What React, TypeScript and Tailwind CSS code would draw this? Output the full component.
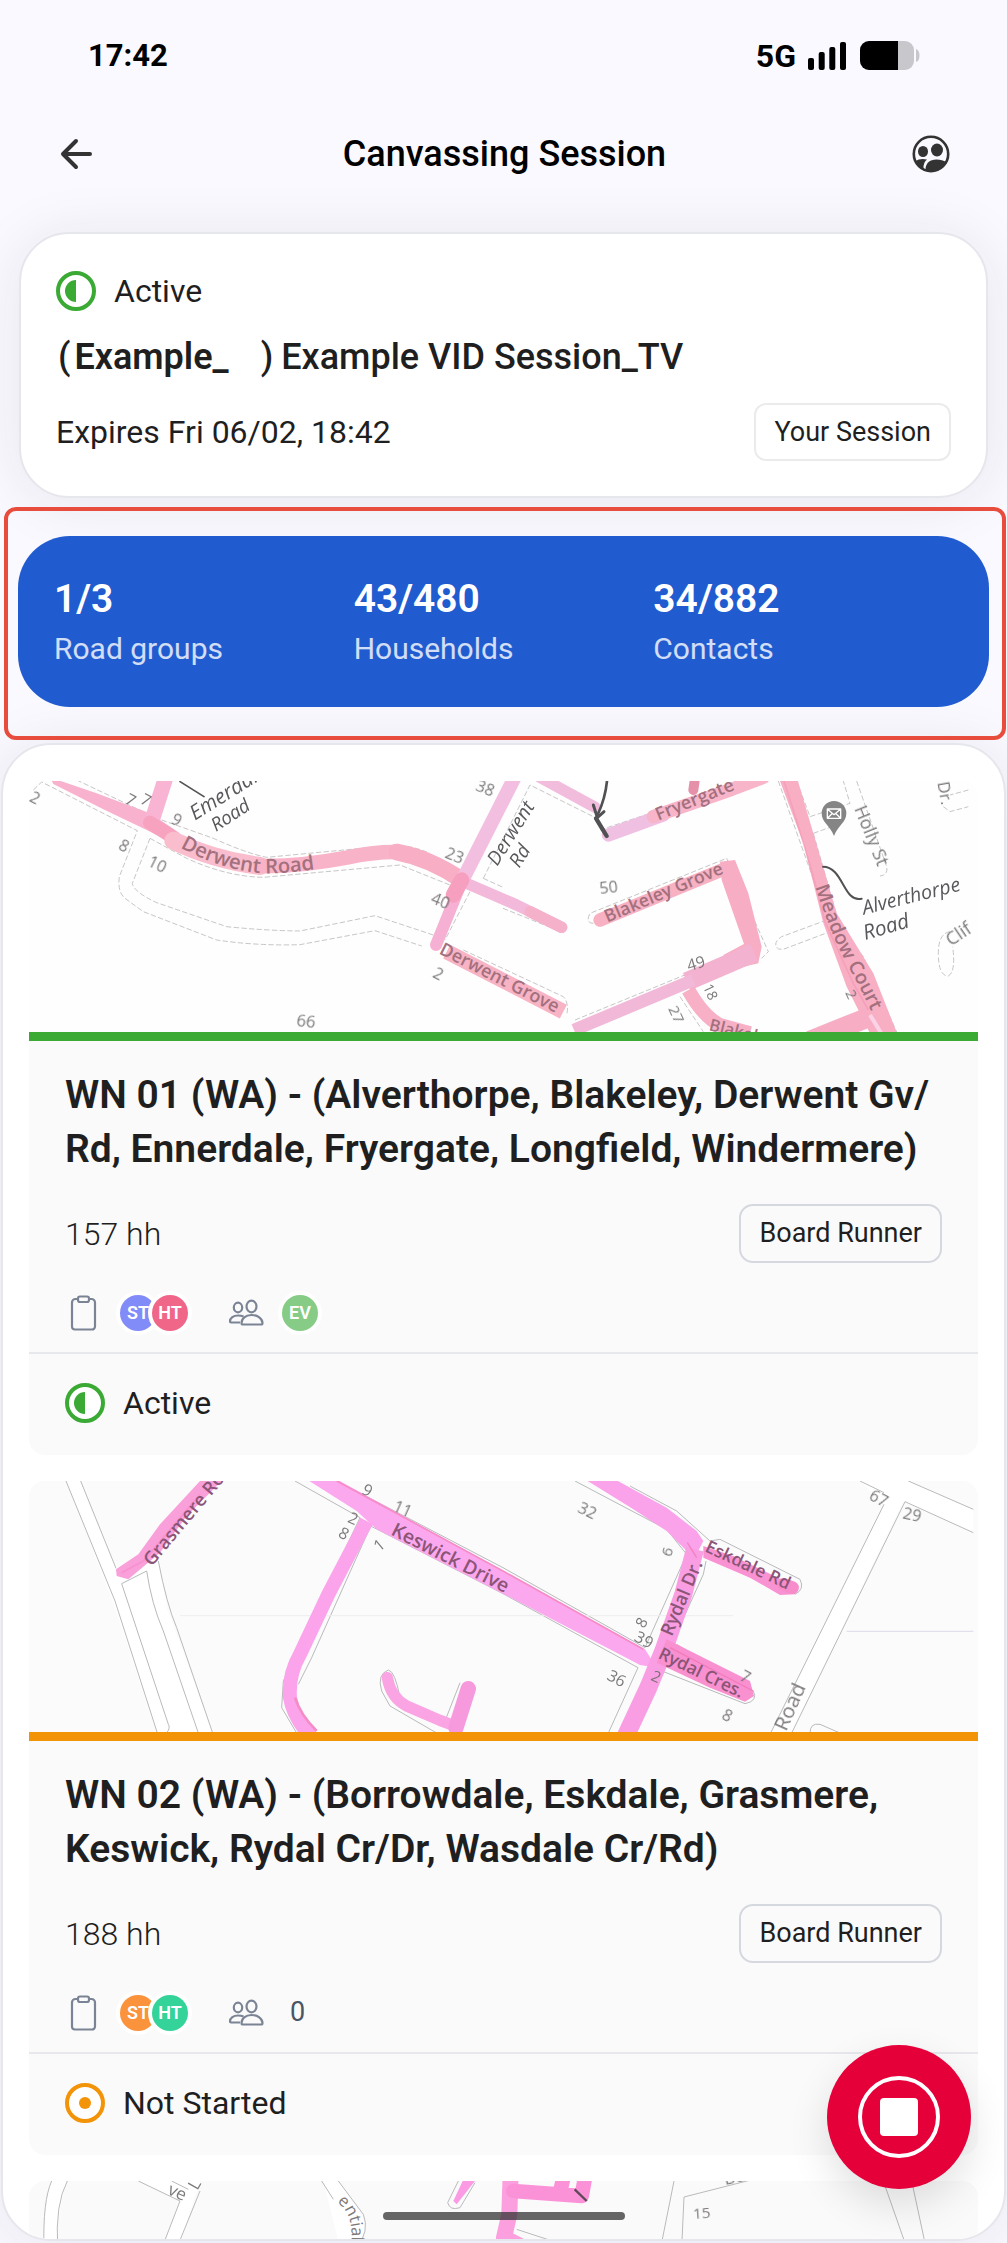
import type { ReactNode } from "react";

type Label = [text: string, x: number, y: number, angle: number, size?: number];

function MapLabels({ items }: { items: Label[] }) {
  return (
    <g fill="#6f6b6d" fontWeight="500" opacity="0.9">
      {items.map(([text, x, y, angle, size]) => (
        <text key={`${text}-${x}`} fontSize={size ?? 48} transform={`translate(${x} ${y}) rotate(${angle})`}>
          {text}
        </text>
      ))}
    </g>
  );
}

function MapFrame({ box, title, children }: { box: string; title: string; children: ReactNode }) {
  return (
    <svg
      viewBox={box}
      preserveAspectRatio="xMidYMin slice"
      role="img"
      aria-label={title}
      className="block h-[251px] w-full font-['Open_Sans',sans-serif]"
      fill="none"
      strokeLinejoin="round"
    >
      {children}
    </svg>
  );
}

function DerwentMap() {
  return (
    <MapFrame box="87 33 2847 753" title="Map of Derwent Road and Blakeley Grove">
      <rect x="87" y="33" width="2847" height="753" fill="#fefefe" />
      <g stroke="#b9bbb9" strokeWidth="2.5" strokeDasharray="16 7">
        <path d="M100 60L125 36L412 182L358 320Q352 365 375 385L430 425L650 510Q770 528 900 524L1125 482L1265 528" />
        <path d="M230 30L440 130M485 150L640 205Q740 250 800 262L1180 226Q1230 224 1290 250" />
        <path d="M450 205L397 340Q400 365 470 398L680 470Q800 482 900 483L1125 437L1300 495" />
        <path d="M450 205L560 265Q680 320 790 322L1200 285L1350 345" />
        <path d="M1500 80L1390 300M1410 365L1335 510M1450 325L1590 45L1780 140M1450 325L1509 352" />
        <path d="M1509 415L1690 488M1390 540L1690 680Q1708 700 1700 735" />
        <path d="M1800 180L2250 30M1780 460Q1755 460 1770 430L2180 265L2305 545L2285 565" />
        <path d="M1725 750L2225 545M2040 680L2110 785M2335 33L2455 370L2560 640L2650 786" />
        <path d="M2390 33L2430 140L2550 100L2530 33M2440 190L2510 165M2440 190L2520 470L2590 560L2690 786" />
        <path d="M2480 450L2345 500Q2315 520 2335 537L2350 538L2490 485" />
        <path d="M2570 33L2660 290Q2665 315 2640 318M2905 60L2850 75M2830 110L2850 125L2905 110" />
        <path d="M2850 485Q2815 490 2815 550Q2815 618 2845 618Q2868 605 2858 530" />
      </g>
      <path d="M150 22L290 70L450 130L540 190L510 215L440 180L310 118L160 42Z" fill="#f9b2cd" />
      <g strokeLinecap="round">
        <path d="M498 20L455 155" stroke="#f8b4d2" strokeWidth="46" />
        <path d="M450 158L510 196" stroke="#f7a3bf" strokeWidth="42" />
        <path d="M520 212Q640 270 780 288" stroke="#f9bdcd" strokeWidth="54" />
        <path d="M780 288Q900 290 1040 263Q1120 245 1190 246" stroke="#f9b3c8" strokeWidth="44" />
        <path d="M1190 246Q1290 265 1385 330" stroke="#f8aec5" strokeWidth="50" />
        <path d="M1545 20L1390 325" stroke="#f3bfe0" strokeWidth="42" />
        <path d="M1400 340L1550 405L1685 472" stroke="#f3b9da" strokeWidth="34" />
        <path d="M1590 425L1685 472" stroke="#f6b1ca" strokeWidth="34" />
        <path d="M1385 335L1308 525" stroke="#f5b0d3" strokeWidth="36" />
        <path d="M1385 330L1360 375" stroke="#f79fbe" strokeWidth="46" />
        <path d="M1340 545L1690 725" stroke="#f8b3c5" strokeWidth="46" strokeLinecap="butt" />
        <path d="M1620 22L1785 112" stroke="#f2bddd" strokeWidth="34" />
        <path d="M1825 195L1990 135" stroke="#f0c0e3" strokeWidth="40" />
        <path d="M1960 140L2195 58L2290 22" stroke="#f8b5c9" strokeWidth="40" />
        <path d="M2085 24L2080 60" stroke="#e691aa" strokeWidth="30" />
        <path d="M1800 450L2185 292" stroke="#f7b1c2" strokeWidth="40" />
      </g>
      <path d="M2160 275L2205 270L2245 370L2285 530L2275 580L2190 600L2170 555L2232 522L2165 330Z" fill="#f7aec4" />
      <path d="M2262 548L2060 635" stroke="#f4b2d1" strokeWidth="56" />
      <path d="M2080 630L1722 780" stroke="#f2b8d8" strokeWidth="38" />
      <path d="M2065 660Q2110 740 2160 765L2250 790" stroke="#f7b0c5" strokeWidth="42" />
      <path d="M2335 20L2390 20L2440 190L2510 430L2620 610L2695 800L2615 800L2540 650L2470 460L2410 220Z" fill="#f8afc4" />
      <path d="M2430 812L2610 740" stroke="#f7aec4" strokeWidth="60" />
      <path d="M2610 735L2650 800" stroke="#fbd3e6" strokeWidth="12" />
      <path d="M2350 28Q2430 270 2475 455L2560 640L2605 720" stroke="#f491b3" strokeWidth="5" opacity="0.5" />
      <g stroke="#515154" strokeLinecap="round">
        <path d="M1822 22Q1818 80 1794 132" strokeWidth="8" />
        <path d="M1780 105L1792 143L1812 125" strokeWidth="9" />
        <path d="M1788 145L1820 198" strokeWidth="13" />
        <path d="M540 35L612 80" strokeWidth="5" />
        <path d="M2469 290C2530 290 2530 400 2585 386" strokeWidth="6" />
      </g>
      <path d="M2502 93a37 37 0 0 1 37 37c0 27-25 37-37 68c-12-31-37-41-37-68a37 37 0 0 1 37-37Z" fill="#858585" />
      <path d="M2482 117h40v28h-40Zm0 0l20 17l20-17M2482 145l14-14M2522 145l-14-14" stroke="#fff" strokeWidth="4" />
      <path id="derwent-road" d="M540 232Q660 300 790 310Q860 312 980 292" />
      <text fontSize="61" fontWeight="600" fill="#a3707e">
        <textPath href="#derwent-road">Derwent Road</textPath>
      </text>
      <path id="meadow-court" d="M2446 350Q2495 500 2540 580Q2590 670 2640 780" />
      <text fontSize="58" fontWeight="600" fill="#a3707e">
        <textPath href="#meadow-court">Meadow Court</textPath>
      </text>
      <g fill="#a3707e" fontWeight="600">
        <text fontSize="54" transform="translate(1315 550) rotate(27)">Derwent Grove</text>
        <text fontSize="54" transform="translate(1975 152) rotate(-22)">Fryergate</text>
        <text fontSize="53" transform="translate(1822 458) rotate(-23)">Blakeley Grove</text>
        <text fontSize="50" transform="translate(2125 780) rotate(14)">Blakeley</text>
      </g>
      <MapLabels
        items={[
          ["2", 85, 92, 28], ["7", 372, 98, 28], ["7", 418, 98, 28], ["9", 510, 158, 28], ["8", 352, 236, 28],
          ["10", 440, 286, 26], ["38", 1424, 60, 22], ["23", 1332, 262, 22], ["40", 1290, 398, 22], ["2", 1295, 620, 28],
          ["66", 888, 768, 6, 50], ["50", 1800, 372, -6], ["49", 2066, 604, -16], ["18", 2108, 650, 65, 42],
          ["27", 2004, 716, 65, 46], ["2", 2535, 668, 65, 44], ["Holly St", 2562, 116, 68, 54], ["Dr.", 2812, 38, 80, 50],
          ["Clif", 2853, 530, -34, 54],
        ]}
      />
      <g fill="#58585c" fontStyle="italic">
        <text fontSize="62" transform="translate(585 152) rotate(-32)">Emerdale</text>
        <text fontSize="56" transform="translate(648 186) rotate(-33)">Road</text>
        <text fontSize="58" transform="translate(1492 290) rotate(-58)">Derwent</text>
        <text fontSize="58" transform="translate(1558 296) rotate(-58)">Rd</text>
        <text fontSize="59" transform="translate(2592 434) rotate(-14)">Alverthorpe</text>
        <text fontSize="62" transform="translate(2596 510) rotate(-16)">Road</text>
      </g>
    </MapFrame>
  );
}

function KeswickMap() {
  return (
    <MapFrame box="87 60 2847 753" title="Map of Keswick Drive and Rydal Drive">
      <rect x="87" y="60" width="2847" height="760" fill="#fbfbfb" />
      <g fill="#fff">
        <path d="M198 60L242 60L348 320L475 285L500 440L640 816L470 816L345 440Z" />
        <path d="M2725 60L2920 145L2920 215L2710 120L2375 816L2312 816L2652 130L2580 60Z" />
      </g>
      <g stroke="#b8babb" strokeWidth="3">
        <path d="M198 60L345 420L472 816M242 60L348 322M500 816Q512 800 505 790L365 368L440 330M440 330Q455 430 490 510L595 816M475 300Q500 430 530 500L638 816" />
        <path d="M885 60L1080 170L910 530L850 660L845 740L890 816M1040 75L1509 320L1935 560M1112 195L1509 398L1914 620L1825 816M1112 195L935 590L895 670" />
        <path d="M1145 690Q1130 640 1165 627Q1185 630 1200 710L1335 780L1380 665M1145 690L1170 735L1310 816" />
        <path d="M1725 60L2000 205L2060 280L1935 560M1890 75L2030 150L2130 240L2160 235L2400 355Q2415 385 2385 400M2118 300L2110 340L2010 560" />
        <path d="M2580 60L2652 95M2652 130L2312 816M2725 60L2920 145M2920 215L2715 122L2375 816M2030 550L2260 690Q2275 720 2235 728L1960 620" />
        <path d="M2430 816Q2430 785 2460 790L2520 816" />
      </g>
      <path d="M540 464H2200" stroke="#eeeeee" strokeWidth="3" />
      <path d="M2540 511H2920" stroke="#e2e2ee" strokeWidth="4" />
      <path d="M600 60L665 60L560 165L480 275L385 355L350 345L348 325L415 280L480 190Z" fill="#f9a0da" />
      <path d="M365 335L430 300L600 100" stroke="#f781c4" strokeWidth="5" opacity="0.5" />
      <path d="M920 55L1010 55L1165 140L1509 330L1935 565L1970 620L1920 612L1509 398L1130 205L1070 150Z" fill="#fca8ef" />
      <path d="M1010 60L1509 330L1930 565" stroke="#f78bc8" strokeWidth="5" />
      <path d="M1100 180L985 400L900 580Q865 640 870 710Q880 770 935 830" stroke="#fba4ec" strokeWidth="42" />
      <path d="M885 710Q900 760 950 810" stroke="#f58cc5" strokeWidth="8" />
      <path d="M1162 650Q1172 710 1220 735L1320 778L1365 795" stroke="#fba4e4" strokeWidth="34" strokeLinecap="round" />
      <path d="M1405 683L1368 800" stroke="#f79add" strokeWidth="46" strokeLinecap="round" />
      <path d="M1760 58L1850 58L2000 140L2090 210L2110 240L2090 280L2060 270L2000 210L1900 145Z" fill="#fba3ea" />
      <path d="M2085 265L2050 400L1990 570L1945 680L1875 830" stroke="#fa9ee3" strokeWidth="54" />
      <path d="M2110 255L2200 285L2395 380L2385 400L2340 402L2250 350L2110 290Z" fill="#f992d2" />
      <path d="M2350 370L2378 380" stroke="#f88ccb" strokeWidth="38" strokeLinecap="round" />
      <path d="M2000 535L2130 600L2250 660L2262 705L2235 722L2130 680L1970 605Z" fill="#f990d0" />
      <path d="M2010 560L2260 690M2062 245L2090 290" stroke="#ee74b4" strokeWidth="4" opacity="0.7" />
      <g fill="#8a5576" fontWeight="600">
        <text fontSize="55" transform="translate(455 318) rotate(-50)">Grasmere Road</text>
        <text fontSize="58" transform="translate(1170 220) rotate(27)">Keswick Drive</text>
        <text fontSize="53" transform="translate(2112 270) rotate(25)">Eskdale Rd</text>
        <text fontSize="55" transform="translate(2015 528) rotate(-67)">Rydal Dr.</text>
        <text fontSize="52" transform="translate(1972 590) rotate(26)">Rydal Cres.</text>
      </g>
      <MapLabels
        items={[
          ["9", 1082, 96, 28], ["11", 1176, 148, 24], ["2", 1040, 182, 24], ["8", 1012, 226, 28], ["1", 1138, 274, -40],
          ["32", 1730, 152, 26], ["6", 2012, 290, -70, 46], ["8", 1932, 504, -60, 46], ["39", 1900, 538, 28], ["36", 1818, 654, 28],
          ["2", 1950, 656, 24, 46], ["7", 2216, 656, 28], ["8", 2162, 772, 28], ["67", 2604, 114, 28], ["29", 2706, 172, 12],
          ["Way Road", 2302, 940, -66, 62],
        ]}
      />
    </MapFrame>
  );
}

function LowerMap() {
  return (
    <MapFrame box="87 120 2847 753" title="Map of the third road group">
      <rect x="87" y="120" width="2847" height="753" fill="#fafafa" />
      <g fill="#fff">
        <path d="M155 120L202 120Q172 200 172 320L132 320Q128 200 155 120Z" />
        <path d="M415 120L600 120L540 310L490 310L540 180Z" />
        <path d="M970 120L1015 120L1090 230Q1105 280 1060 320L1020 320Z" />
      </g>
      <g stroke="#b8babb" strokeWidth="3">
        <path d="M155 120Q128 180 132 320M202 120Q165 190 173 320M415 120L540 180L490 310M515 120L565 145M600 150L535 310M965 120L1000 175M1015 120L1090 220Q1110 270 1070 320" />
        <path d="M1375 120L1343 185Q1350 210 1380 200L1425 125M2022 120L1982 320M2045 320L2052 168L2280 110M2650 120L2720 320M2735 120L2778 320M1550 265L1780 340" />
      </g>
      <path d="M1395 105L1425 120L1370 190L1360 180Z" fill="#fa9be3" />
      <path d="M1532 100L1528 220L1512 290L1590 330" stroke="#fc9fdf" strokeWidth="48" />
      <path d="M1540 150L1745 165L1755 110M1690 110L1680 155" stroke="#fb92d8" strokeWidth="44" strokeLinecap="round" />
      <path d="M1724 145L1760 180" stroke="#5c4856" strokeWidth="7" />
      <path id="sequential" d="M1010 185Q1070 220 1050 340" />
      <text fontSize="50" fontWeight="500" fill="#7c7879">
        <textPath href="#sequential">ential</textPath>
      </text>
      <MapLabels items={[["ve", 500, 158, 24, 52], ["L", 592, 150, -60, 50], ["15", 2080, 234, -4, 46], ["Bea", 2176, 132, -12, 50]]} />
    </MapFrame>
  );
}

function ActiveIcon() {
  return (
    <svg viewBox="0 0 40 40" className="size-10 shrink-0" aria-hidden="true">
      <circle cx="20" cy="20" r="18" fill="#fff" stroke="#3aaa35" strokeWidth="4" />
      <path d="M20 9a11 11 0 0 0 0 22Z" fill="#3aaa35" />
    </svg>
  );
}

function NotStartedIcon() {
  return (
    <svg viewBox="0 0 40 40" className="size-10 shrink-0" aria-hidden="true">
      <circle cx="20" cy="20" r="18" fill="#fff" stroke="#f39308" strokeWidth="4" />
      <circle cx="20" cy="20" r="6" fill="#f39308" />
    </svg>
  );
}

function ClipboardIcon() {
  return (
    <svg viewBox="0 0 28 36" className="h-9 w-7" fill="none" stroke="#7b8494" strokeWidth="2.2" aria-hidden="true">
      <path d="M8 4H5.500a3.500 3.500 0 0 0-3.500 3.500V31.500a3 3 0 0 0 3 3H22a3 3 0 0 0 3-3V7.500A3.500 3.500 0 0 0 21.500 4H19" />
      <rect x="8" y="1.500" width="11" height="5.500" rx="2" />
    </svg>
  );
}

function PeopleIcon() {
  return (
    <svg viewBox="0 0 36 28" className="h-7 w-9" fill="none" stroke="#7b8494" strokeWidth="2.2" strokeLinejoin="round" aria-hidden="true">
      <ellipse cx="23.500" cy="7.500" rx="5" ry="5.800" />
      <ellipse cx="10" cy="8.500" rx="4.200" ry="4.800" />
      <path d="M13.500 24c0-4.500 4-8 10-8s11 3.500 11 8q0 1.500-1.500 1.500h-18q-1.500 0-1.500-1.500Z" />
      <path d="M15.500 17.500C14 16.800 12.200 16.500 10 16.500c-4.500 0-8 2.500-8 6q0 1 1 1h9" />
    </svg>
  );
}

type Person = { initials: string; color: string };

function Avatar({ initials, color }: Person) {
  return (
    <span className="relative rounded-full bg-white p-1">
      <span className={`flex size-9 items-center justify-center rounded-full text-lg font-semibold text-white ${color}`}>
        {initials}
      </span>
    </span>
  );
}

type RoadGroup = {
  title: string;
  households: string;
  leads: Person[];
  helpers: Person[];
  status: "Active" | "Not Started";
  bar: string;
  map: ReactNode;
};

const groups: RoadGroup[] = [
  {
    title: "WN 01 (WA) - (Alverthorpe, Blakeley, Derwent Gv/\u200bRd, Ennerdale, Fryergate, Longfield, Windermere)",
    households: "157 hh",
    leads: [
      { initials: "ST", color: "bg-[#828cf8]" },
      { initials: "HT", color: "bg-[#f06688]" },
    ],
    helpers: [{ initials: "EV", color: "bg-[#86cc86]" }],
    status: "Active",
    bar: "bg-[#3aaa35]",
    map: <DerwentMap />,
  },
  {
    title: "WN 02 (WA) - (Borrowdale, Eskdale, Grasmere, Keswick, Rydal Cr/Dr, Wasdale Cr/Rd)",
    households: "188 hh",
    leads: [
      { initials: "ST", color: "bg-[#fb923c]" },
      { initials: "HT", color: "bg-[#34d399]" },
    ],
    helpers: [],
    status: "Not Started",
    bar: "bg-[#f39308]",
    map: <KeswickMap />,
  },
];

function GroupCard({ group }: { group: RoadGroup }) {
  return (
    <article className="shrink-0 overflow-hidden rounded-2xl bg-[#fafafa]">
      {group.map}
      <div className={`h-[9px] ${group.bar}`} />
      <div className="flex flex-col gap-7 px-9 pt-[27px] pb-[18px]">
        <h2 className="text-[39px] leading-[54px] font-semibold">{group.title}</h2>
        <div className="flex items-center justify-between">
          <p className="text-[32px] leading-[44px] font-light">{group.households}</p>
          <button type="button" className="h-[59px] rounded-[14px] border-2 border-[#d5d8df] px-[18px] text-[27px]">
            Board Runner
          </button>
        </div>
        <div className="flex h-[43px] items-center">
          <span className="ml-[5px] w-[46px]">
            <ClipboardIcon />
          </span>
          <div className="flex -space-x-3">
            {group.leads.map((person) => (
              <Avatar key={person.initials} {...person} />
            ))}
          </div>
          <span className="ml-9 w-[50px]">
            <PeopleIcon />
          </span>
          {group.helpers.length ? (
            group.helpers.map((person) => <Avatar key={person.initials} {...person} />)
          ) : (
            <span className="ml-3 text-[27px] text-gray-600">0</span>
          )}
        </div>
      </div>
      <div className="flex items-center gap-[18px] border-t-2 border-[#e7e8ec] px-9 pt-[29px] pb-8">
        {group.status === "Active" ? <ActiveIcon /> : <NotStartedIcon />}
        <span className="text-[32px] leading-10">{group.status}</span>
      </div>
    </article>
  );
}

function Stat({ value, label }: { value: string; label: string }) {
  return (
    <div className="flex flex-col">
      <dt className="order-last text-[30px] leading-[50px] text-white/80">{label}</dt>
      <dd className="text-[39px] leading-[50px] font-semibold">{value}</dd>
    </div>
  );
}

export default function App() {
  return (
    <div className="relative flex h-screen flex-col overflow-hidden bg-[#faf9ff] pb-0.5 font-[Roboto,sans-serif] text-[#1f1f1f]">
      <div className="flex h-28 shrink-0 items-center justify-between pr-[87px] pl-[88px] text-black">
        <span className="text-[31px] font-bold">17:42</span>
        <div className="flex items-center gap-3">
          <span className="text-[32px] leading-8 font-bold">5G</span>
          <svg viewBox="0 0 38 28" className="h-7 w-[38px]" aria-label="Signal" role="img">
            <rect y="16" width="6" height="12" rx="2" />
            <rect x="10.700" y="10" width="6" height="18" rx="2" />
            <rect x="21.300" y="5" width="6" height="23" rx="2" />
            <rect x="32" width="6" height="28" rx="2" />
          </svg>
          <svg viewBox="0 0 60 30" className="ml-0.5 h-[30px] w-[60px]" aria-label="Battery" role="img">
            <rect width="54" height="29" rx="9" fill="#c8c7cc" />
            <path d="M9 0H38V29H9a9 9 0 0 1-9-9V9a9 9 0 0 1 9-9Z" />
            <path d="M56 8q3.500 1 3.500 6.500t-3.500 6.500Z" fill="#c8c7cc" />
          </svg>
        </div>
      </div>

      <header className="flex h-[84px] shrink-0 items-center justify-between px-[57px]">
        <button type="button" aria-label="Back" className="size-10">
          <svg viewBox="0 0 40 40" fill="none" stroke="#333" strokeWidth="4" strokeLinecap="round" strokeLinejoin="round">
            <path d="M33 20H6M19 7L6 20L19 33" />
          </svg>
        </button>
        <h1 className="text-[36px] leading-[44px] font-medium text-black">Canvassing Session</h1>
        <button type="button" aria-label="Team" className="size-[38px]">
          <svg viewBox="0 0 38 38" fill="#333">
            <circle cx="19" cy="19" r="17.200" fill="none" stroke="#333" strokeWidth="2.600" />
            <ellipse cx="11" cy="16.500" rx="5" ry="5.500" />
            <ellipse cx="25" cy="15" rx="6" ry="6.500" />
            <path d="M3.500 26Q8 23 15 24.500Q11 27.500 11.500 34Q6 31 3.500 26Z" />
            <path d="M13.500 34.500C13.500 28.500 17.500 24.500 24.500 24.500q6 0 9.500 2.500Q29 36.500 19 36.500Q16 36.500 13.500 34.500Z" />
          </svg>
        </button>
      </header>

      <section className="mx-[19px] mt-9 flex shrink-0 flex-col gap-6 rounded-[50px] border-2 border-[#e6e6ed] bg-white px-[35px] pt-[37px] pb-[35px] shadow-[0_4px_60px_rgba(30,30,70,0.09)]">
        <div className="flex items-center gap-[18px]">
          <ActiveIcon />
          <span className="text-[32px] leading-10">Active</span>
        </div>
        <h2 className="flex text-[36px] leading-[44px] font-semibold">
          <span className="pl-0.5 font-medium">(</span>
          <span className="pl-1">Example_</span>
          <span className="pl-8 font-medium">)</span>
          <span className="pl-2 font-medium">Example VID Session_TV</span>
        </h2>
        <div className="flex items-center justify-between">
          <p className="text-[32px] leading-[44px]">Expires Fri 06/02, 18:42</p>
          <button type="button" className="h-[58px] rounded-[12px] border-2 border-[#ebebeb] px-[18px] text-[27px]">
            Your Session
          </button>
        </div>
      </section>

      <section className="relative mt-[9px] mr-px ml-1 shrink-0 rounded-[12px] border-4 border-[#e74c3c] pt-[25px] pr-[13px] pb-[29px] pl-2.5">
        <dl className="grid grid-cols-3 rounded-[52px] bg-[#205bcf] px-9 pt-[38px] pb-[33px] text-white">
          <Stat value="1/3" label="Road groups" />
          <Stat value="43/480" label="Households" />
          <Stat value="34/882" label="Contacts" />
        </dl>
      </section>

      <main className="mx-px mt-[3px] flex min-h-0 flex-1 flex-col gap-[26px] overflow-hidden rounded-[50px] border-2 border-[#e6e6ed] bg-white px-[26px] pt-9 shadow-[0_4px_60px_rgba(30,30,70,0.09)]">
        {groups.map((group) => (
          <GroupCard key={group.title} group={group} />
        ))}
        <article className="shrink-0 overflow-hidden rounded-2xl bg-[#fafafa]">
          <LowerMap />
        </article>
      </main>

      <button
        type="button"
        aria-label="Stop session"
        className="absolute right-9 bottom-[54px] flex size-36 items-center justify-center rounded-full bg-[#e5003a] shadow-[0_16px_40px_rgba(0,0,0,0.12)]"
      >
        <span className="flex size-[82px] items-center justify-center rounded-full border-4 border-white">
          <span className="size-[38px] rounded-[4px] bg-white" />
        </span>
      </button>
      <div className="absolute bottom-[23px] left-1/2 h-2 w-[242px] -translate-x-1/2 rounded-full bg-[#333]/75" />
    </div>
  );
}
